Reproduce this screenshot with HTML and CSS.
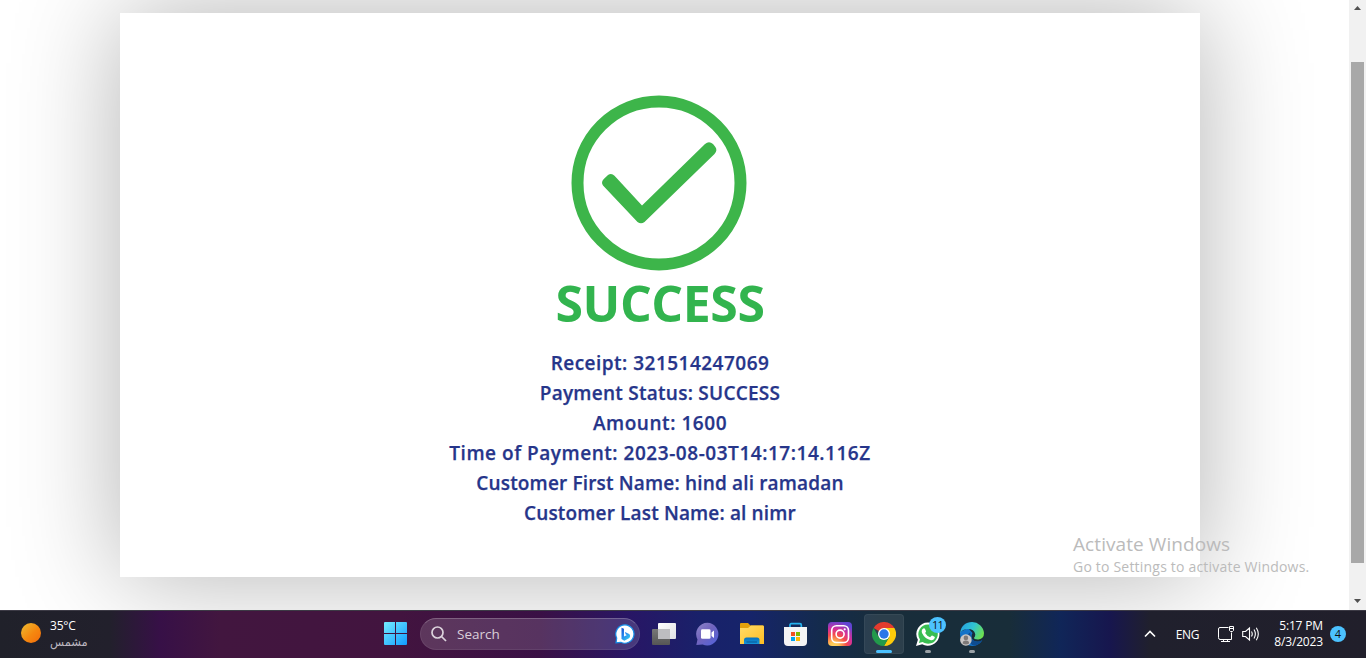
FILE: index.html
```html
<!DOCTYPE html>
<html lang="en">
<head>
<meta charset="utf-8">
<title>Payment success</title>
<link rel="stylesheet" href="styles.css">
</head>
<body>
<div class="screen">
  <div class="viewport">
    <main class="page">
      <section class="card">
        <svg class="check" width="176" height="176" viewBox="0 0 176 176">
          <circle cx="88" cy="88" r="81.5" fill="none" stroke="#3db54a" stroke-width="12"/>
          <path d="M33.3 83.4L37 80Q40.500 77.500 43.500 80.800L71 110.500L134 49Q138 45.500 142 49L144 51.500Q147 55 143.500 59L73.500 127Q70 129.500 66.500 127L32 90.500Q29.500 87 33.300 83.400Z" fill="#3db54a"/>
        </svg>
        <h1 class="title">SUCCESS</h1>
        <div class="details">
          <p class="l1">Receipt: 321514247069</p>
          <p class="l2">Payment Status: SUCCESS</p>
          <p class="l3">Amount: 1600</p>
          <p class="l4">Time of Payment: 2023-08-03T14:17:14.116Z</p>
          <p class="l5">Customer First Name: hind ali ramadan</p>
          <p class="l6">Customer Last Name: al nimr</p>
        </div>
      </section>
    </main>
    <div class="scrollbar">
      <svg width="17" height="17" viewBox="0 0 17 17"><path d="M5 10L8.500 6L12 10Z" fill="#505050"/></svg>
      <div class="thumb"></div>
      <svg width="17" height="17" viewBox="0 0 17 17"><path d="M5 6L8.500 10L12 6Z" fill="#505050"/></svg>
    </div>
    <div class="watermark">
      <div class="wm-title">Activate Windows</div>
      <div class="wm-sub">Go to Settings to activate Windows.</div>
    </div>
  </div>

  <footer class="taskbar">
    <div class="weather">
      <span class="sun"></span>
      <div class="weather-text"><span class="temp">35°C</span><span class="cond" dir="rtl" lang="ar">مشمس</span></div>
    </div>

    <div class="center">
      <svg class="start" width="24" height="24" viewBox="0 0 24 24">
        <defs><linearGradient id="win" gradientUnits="userSpaceOnUse" x1="0" y1="0" x2="24" y2="24"><stop stop-color="#74ecff"/><stop offset="1" stop-color="#0c98ff"/></linearGradient></defs>
        <path d="M1 0H11V11H0V1Q0 0 1 0ZM12 0H22Q23 0 23 1V11H12ZM0 12H11V23H1Q0 23 0 22ZM12 12H23V22Q23 23 22 23H12Z" fill="url(#win)"/>
      </svg>

      <div class="search">
        <svg width="16" height="16" viewBox="0 0 16 16" fill="none" stroke="#dcd3dc" stroke-width="1.700"><circle cx="6.500" cy="6.500" r="5.500"/><path d="M10.500 10.500L15 15"/></svg>
        <span>Search</span>
        <svg class="bing" width="20" height="20" viewBox="0 0 20 20">
          <defs><linearGradient id="bing" x1="0" y1="0" x2=".7" y2="1"><stop stop-color="#1b52cf"/><stop offset=".5" stop-color="#2587ee"/><stop offset="1" stop-color="#38c9ee"/></linearGradient></defs>
          <path d="M10 .8A9.200 9.200 0 1 1 5.800 18.300L1 18.800L1.700 14A9.200 9.200 0 0 1 10 .8Z" fill="#fff" stroke="#168ee8" stroke-width="1.200"/>
          <path d="M6.500 3.800L9 4.800V12.500L12 11L10.800 10.400L9.900 8L14.200 10.100Q16.200 12.300 14 14.300L9.300 16.800L6.500 15Z" fill="url(#bing)"/>
        </svg>
      </div>

      <div class="apps">
        <div class="app">
          <svg width="24" height="24" viewBox="0 0 24 24">
            <defs><linearGradient id="tvw" x1="0" y1="0" x2="1" y2="1"><stop stop-color="#fff"/><stop offset="1" stop-color="#e0e0e3"/></linearGradient><linearGradient id="tvg" x1="0" y1="0" x2="0" y2="1"><stop stop-color="#777"/><stop offset="1" stop-color="#555"/></linearGradient></defs>
            <rect y="7" width="18" height="16" rx="1" fill="url(#tvg)"/><rect x="6" y="1" width="18" height="16" rx="1" fill="url(#tvw)"/><rect x="6" y="7" width="12" height="10" fill="#bdbdc0"/>
          </svg>
        </div>
        <div class="app">
          <svg width="24" height="24" viewBox="0 0 24 24">
            <defs><linearGradient id="chat" x1="0" y1="0" x2="1" y2="1"><stop stop-color="#8e87c9"/><stop offset=".45" stop-color="#7164bd"/><stop offset="1" stop-color="#4f61dd"/></linearGradient></defs>
            <path d="M11.500 .8A11.300 11.300 0 1 1 6.700 22.500L.3 23L1.500 17.500A11.300 11.300 0 0 1 11.500 .8Z" fill="url(#chat)"/>
            <rect x="5" y="7.300" width="9.500" height="9.500" rx="1.300" fill="#fff"/><path d="M15.500 10.500L18 8.400V16L15.500 14Z" fill="#fff"/>
          </svg>
        </div>
        <div class="app">
          <svg width="24" height="24" viewBox="0 0 24 24">
            <defs><linearGradient id="fold" x1="0" y1="0" x2="1" y2="1"><stop stop-color="#ffdc69"/><stop offset="1" stop-color="#ffbd22"/></linearGradient><linearGradient id="blue" x1="0" y1="0" x2="0" y2="1"><stop stop-color="#0871bd"/><stop offset="1" stop-color="#1594da"/></linearGradient></defs>
            <path d="M0 2Q0 1 1 1H8L10.500 3.500H23Q24 3.500 24 5V12H0Z" fill="#e3a10b"/><path d="M0 6H8L11 3.500H23Q24 3.500 24 5V22H0Z" fill="url(#fold)"/><path d="M4 22V18Q4 15.500 6.500 15.500H17Q19.500 15.500 19.500 18V22Z" fill="url(#blue)"/><path d="M6.500 20H17" stroke="#075796" stroke-width="1"/>
          </svg>
        </div>
        <div class="app">
          <svg width="24" height="24" viewBox="0 0 24 24">
            <path d="M6 6V3Q6 1.700 7.300 1.700H16Q17.300 1.700 17.300 3V6" fill="none" stroke="#25b1ec" stroke-width="1.700"/>
            <path d="M0 5H23V20Q23 24 19 24H4Q0 24 0 20Z" fill="#f4f4f5"/>
            <path d="M7 10h4v4H7z" fill="#f25022"/><path d="M12 10h4v4h-4z" fill="#7fba00"/><path d="M7 15h4v4H7z" fill="#00a4ef"/><path d="M12 15h4v4h-4z" fill="#ffb900"/>
          </svg>
        </div>
        <div class="app">
          <svg width="24" height="24" viewBox="0 0 24 24">
            <defs><radialGradient id="insta" cx=".25" cy="1.050" r="1.100"><stop stop-color="#ffdc67"/><stop offset=".2" stop-color="#fdc351"/><stop offset=".48" stop-color="#f54c4a"/><stop offset=".7" stop-color="#d4309a"/><stop offset="1" stop-color="#6045d3"/></radialGradient></defs>
            <rect width="24" height="24" rx="4" fill="url(#insta)"/><g fill="none" stroke="#fff" stroke-width="1.600"><rect x="3.700" y="3.700" width="16.800" height="16.800" rx="4.800"/><circle cx="12.100" cy="12.100" r="4"/></g><circle cx="16.700" cy="7.300" r="1.100" fill="#fff"/>
          </svg>
        </div>
        <div class="app active">
          <svg width="24" height="24" viewBox="0 0 24 24">
            <path d="M12 12L1.600 6A12 12 0 0 1 22.400 6Z" fill="#e33b2e"/><path d="M12 12V6H22.400A12 12 0 0 1 12 24L17.200 15Z" fill="#fdcb0a"/><path d="M12 12L17.200 15L12 24A12 12 0 0 1 1.600 6L6.800 15Z" fill="#229a4b"/>
            <circle cx="12" cy="12" r="6" fill="#fff"/><circle cx="12" cy="12" r="4.700" fill="#2b76e8"/>
          </svg>
          <i class="line on"></i>
        </div>
        <div class="app">
          <svg width="24" height="24" viewBox="0 0 24 24">
            <path d="M12.300 .5A11.600 11.600 0 1 1 6.200 22.200L0 24L1.900 17.800A11.600 11.600 0 0 1 12.300 .5Z" fill="#fff"/><path d="M12.300 2.500A9.600 9.600 0 1 1 6.600 19.900L2.900 21L4 17.400A9.600 9.600 0 0 1 12.300 2.500Z" fill="#39be52"/>
            <path d="M7.300 6.500Q8.500 6 9 7L10 9.200Q10.200 9.800 9.100 11Q11 14.200 14.100 15.300L15.500 13.800Q16 13.400 16.600 13.700L18.500 14.700Q19.200 15 18.600 16.200Q17.500 18.500 15 18.200Q9 17.200 6 11Q5 8 7.300 6.500Z" fill="#fff"/>
          </svg>
          <b class="badge">11</b><i class="line"></i>
        </div>
        <div class="app">
          <svg width="24" height="24" viewBox="0 0 24 24">
            <defs><linearGradient id="edgeTop" x1="0" y1=".2" x2="1" y2=".6"><stop stop-color="#269fe0"/><stop offset=".5" stop-color="#30c5d2"/><stop offset="1" stop-color="#6de04f"/></linearGradient></defs>
            <path d="M.2 10A12 12 0 0 0 12 24Q18.500 24 22.300 18.200Q18 21 14 19Q10 16 12.500 11L8 6Z" fill="#1273c8"/>
            <path d="M.2 11C1 3.500 6 0 12 0A12 12 0 0 1 24 11Q24 16.800 18.500 17.500Q14 17.700 14 15.800Q15.500 14.500 15.200 12Q14 7 8 7Q2.500 7 .2 11Z" fill="url(#edgeTop)"/>
            <path d="M10.500 10.300Q7 12 7.500 16Q9 23 15 23.600Q19.500 22.500 22.300 18.200Q17 21 13 18Q9.500 15 10.500 10.300Z" fill="#0d4c91"/>
            <circle cx="5.900" cy="18" r="5.800" fill="#c8c6c5"/><circle cx="5.900" cy="15.900" r="2.300" fill="#7c7978"/><path d="M2.700 21.500Q2.500 18.500 5.900 18.500Q9.300 18.500 9.100 21.500Q5.900 23.700 2.700 21.500Z" fill="#7c7978"/>
          </svg>
          <i class="line"></i>
        </div>
      </div>
    </div>

    <div class="tray">
      <svg class="chevron" width="12" height="8" viewBox="0 0 12 8" fill="none" stroke="#fff" stroke-width="1.600"><path d="M1 6.500L6 1.500L11 6.500"/></svg>
      <span class="lang">ENG</span>
      <svg class="net" width="17" height="17" viewBox="0 0 17 17" fill="none" stroke="#fff" stroke-width="1"><path d="M10.500 1.500H2Q.5 1.500 .5 3V11.500Q.5 13.500 2 13.500H13.500V6.500M5.500 13.500V15.500M9.500 13.500V15.500M3 15.500H12M11.500 .5H15.500V4.500L14.500 5.500H12.500L11.500 4.500ZM11.500 2.500H15.500"/></svg>
      <svg class="vol" width="18" height="16" viewBox="0 0 18 16" fill="none" stroke="#fff" stroke-width="1.100"><path d="M.7 5.500H3.500L7.500 2V14L3.500 10.500H.7ZM9.500 5.500Q11 8 9.500 10.500M12 3.500Q14.700 8 12 12.500M14.300 1.700Q18.300 8 14.300 14.300"/></svg>
      <div class="clock"><span class="time">5:17 PM</span><span class="date">8/3/2023</span></div>
      <span class="count">4</span>
    </div>
  </footer>
</div>
</body>
</html>
```
FILE: styles.css
```css
* { box-sizing: border-box; }
body { margin: 0; background: #fff; font-family: "Open Sans", "Noto Sans", sans-serif; overflow: hidden; }
svg { display: block; flex: none; }
.screen { display: flex; flex-direction: column; width: 1366px; height: 658px; }
.viewport { position: relative; display: flex; height: 610px; overflow: hidden; }
.page { flex: 1; padding: 13px 149px 33px 120px; overflow: hidden; }
.card { display: flex; flex-direction: column; align-items: center; height: 564px; padding-top: 81.500px; background: #fff; box-shadow: 0 0 100px rgba(0, 0, 0, .3); }
.check { margin-right: 2px; }
.title { margin: 2.500px 0 0; font-size: 50px; line-height: 60px; font-weight: 700; letter-spacing: -.45px; color: #32b44e; white-space: nowrap; }
.details { margin-top: 15px; text-align: center; font-size: 19px; font-weight: 600; line-height: 30px; color: #26358a; white-space: nowrap; -webkit-text-stroke: .25px #26358a; }
.details p { margin: 0; }
.l1 { letter-spacing: .48px; }
.l2 { letter-spacing: .26px; }
.l3 { letter-spacing: .55px; }
.l4 { letter-spacing: .54px; }
.l5 { letter-spacing: .17px; }
.l6 { letter-spacing: .15px; }
.scrollbar { display: flex; flex-direction: column; justify-content: space-between; align-items: center; width: 17px; background: #f1f1f1; }
.thumb { width: 13px; height: 501px; margin-top: 45px; margin-bottom: auto; background: #a8a8a8; }
.watermark { position: absolute; left: 1073px; top: 532px; color: #bbb; white-space: nowrap; }
.wm-title { font-size: 19px; line-height: 25px; letter-spacing: .08px; }
.wm-sub { font-size: 14px; line-height: 20px; letter-spacing: .2px; }

.taskbar { display: flex; align-items: center; height: 48px; padding-bottom: 1px; border-top: 1px solid #3c3a45; color: #fff; background: linear-gradient(90deg, #20212a 0, #22202c 110px, #371047 160px, #42163f 220px, #42143f 400px, #3a1045 540px, #281665 630px, #19216a 700px, #16246a 750px, #142b4d 820px, #182d3b 880px, #182d39 1010px, #102658 1060px, #17164e 1110px, #20202d 1150px, #211f2b 1366px); }
.weather { display: flex; align-items: center; gap: 9px; width: 384px; padding-left: 21px; }
.sun { width: 20px; height: 20px; margin-top: -2px; border-radius: 50%; background: linear-gradient(135deg, #edbd32, #f5880f 55%, #f36b0b); }
.weather-text { display: flex; flex-direction: column; align-items: flex-start; font-size: 12px; line-height: 16px; }
.cond { font-family: "DejaVu Sans", sans-serif; font-size: 11.500px; color: #bbb6bf; }
.temp { letter-spacing: -.2px; }
.center { display: flex; align-items: center; height: 46px; }
.search { display: flex; align-items: center; width: 220px; height: 32px; margin-left: 12px; padding: 0 4px 0 10px; border-radius: 16px; border: 1px solid rgba(255, 255, 255, .07); border-top-color: rgba(255, 255, 255, .22); background: rgba(255, 255, 255, .15); font-size: 13.500px; color: #d9ced9; }
.search span { margin-left: 10px; }
.bing { margin-left: auto; }
.apps { display: flex; margin-left: 4px; }
.app { position: relative; display: flex; justify-content: center; align-items: center; width: 40px; height: 40px; margin-right: 4px; border-radius: 4px; }
.active { background: rgba(255, 255, 255, .09); border: 1px solid rgba(255, 255, 255, .05); }
.line { position: absolute; bottom: 1px; left: 17px; width: 6px; height: 3px; border-radius: 2px; background: #9aa1a6; }
.line.on { left: 11px; bottom: 0; width: 16px; background: #4cc2ff; }
.badge { position: absolute; left: 21px; top: 3px; width: 17px; height: 16px; border-radius: 50%; background: #4cc2ff; color: #111; font-size: 11px; line-height: 16px; font-weight: 400; text-align: center; letter-spacing: -.8px; }
.tray { display: flex; align-items: center; margin-left: auto; padding-right: 20px; }
.lang { margin-left: 20px; font-size: 12px; letter-spacing: -.3px; }
.net { margin-left: 19px; }
.vol { margin-left: 7px; }
.clock { display: flex; flex-direction: column; align-items: flex-end; margin-left: 14px; font-size: 12px; line-height: 16px; letter-spacing: -.15px; white-space: nowrap; }
.count { width: 16px; height: 16px; margin-left: 7px; border-radius: 50%; background: #4cc2ff; color: #111; font-size: 11px; line-height: 16px; text-align: center; }
```
